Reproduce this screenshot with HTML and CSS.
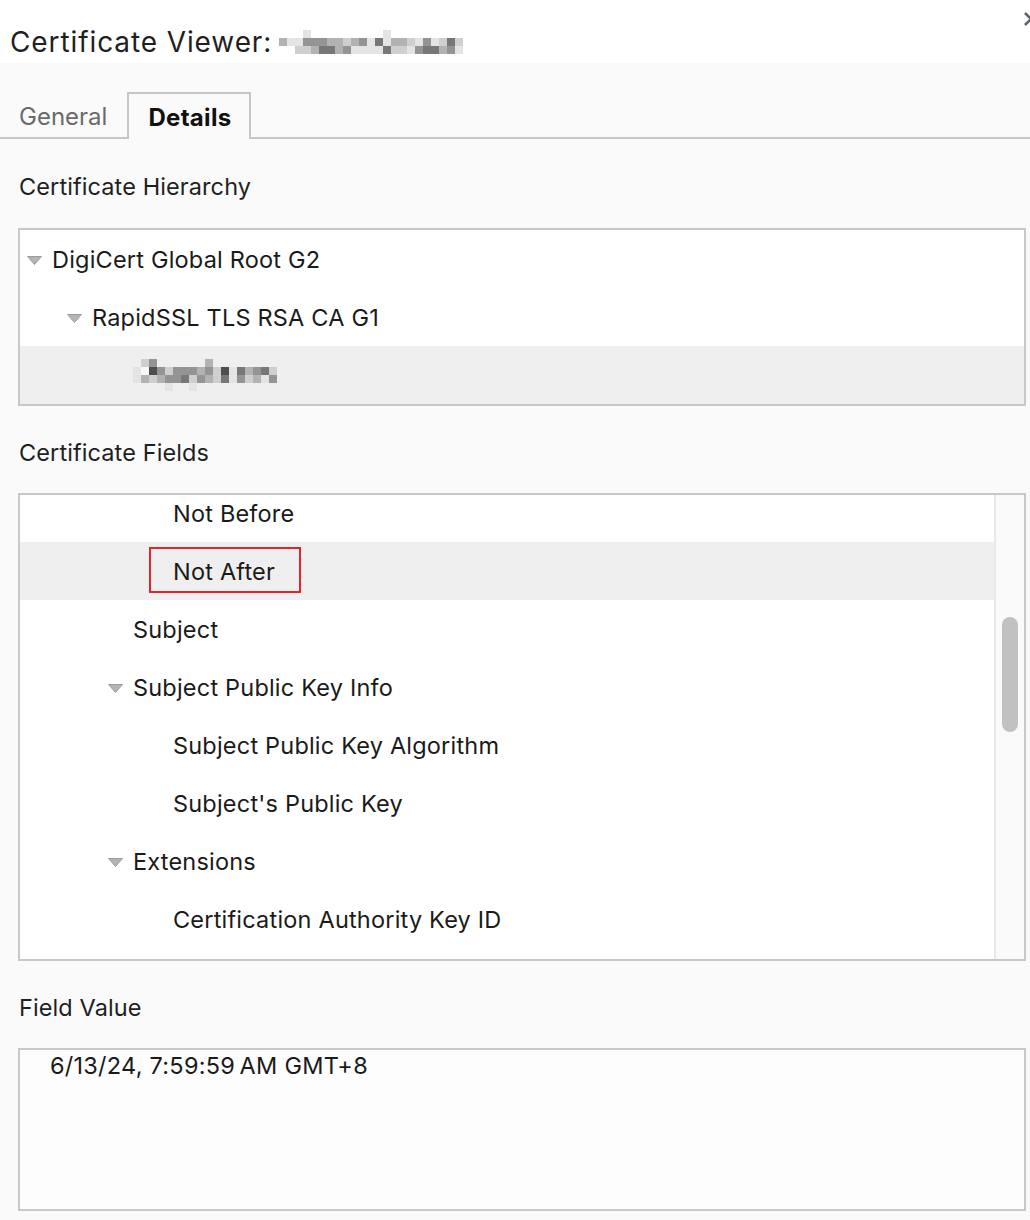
FILE: index.html
```html
<!DOCTYPE html>
<html lang="en">
<head>
<meta charset="utf-8">
<title>Certificate Viewer</title>
<link rel="stylesheet" href="styles.css">
</head>
<body>
<div class="dialog">
  <header class="titlebar">
    <h1 class="title">Certificate Viewer: <span class="mosaic m-title" aria-hidden="true">
      <span class="c0"></span><span class="c0"></span><span class="c0"></span><span class="c1"></span><span class="c0"></span><span class="c0"></span><span class="c0"></span><span class="c0"></span><span class="c0"></span><span class="c0"></span><span class="c0"></span><span class="c0"></span><span class="c0"></span><span class="c1"></span><span class="c0"></span><span class="c0"></span><span class="c0"></span><span class="c0"></span><span class="c0"></span><span class="c0"></span><span class="c0"></span><span class="c0"></span><span class="c0"></span>
      <span class="c3"></span><span class="c1"></span><span class="c1"></span><span class="c4"></span><span class="c4"></span><span class="c4"></span><span class="c3"></span><span class="c3"></span><span class="c2"></span><span class="c3"></span><span class="c4"></span><span class="c1"></span><span class="c5"></span><span class="c1"></span><span class="c3"></span><span class="c3"></span><span class="c2"></span><span class="c1"></span><span class="c4"></span><span class="c1"></span><span class="c2"></span><span class="c5"></span><span class="c2"></span>
      <span class="c0"></span><span class="c0"></span><span class="c2"></span><span class="c2"></span><span class="c3"></span><span class="c5"></span><span class="c5"></span><span class="c3"></span><span class="c4"></span><span class="c1"></span><span class="c1"></span><span class="c1"></span><span class="c1"></span><span class="c5"></span><span class="c2"></span><span class="c2"></span><span class="c1"></span><span class="c4"></span><span class="c5"></span><span class="c5"></span><span class="c3"></span><span class="c4"></span><span class="c1"></span>
    </span></h1>
    <svg class="close" viewBox="0 0 18 18" aria-hidden="true"><path d="M3 3 L15 15 M15 3 L3 15" /></svg>
  </header>

  <main class="main">
    <nav class="tabs">
      <div class="tab">General</div>
      <div class="tab active">Details</div>
    </nav>

    <section class="content">
      <div class="label first">Certificate Hierarchy</div>
      <div class="box hierarchy">
        <div class="row lvl0"><svg class="twisty" viewBox="0 0 15 9"><polygon points="0.5,0.5 14.5,0.5 7.5,8.5"/></svg>DigiCert Global Root G2</div>
        <div class="row lvl1"><svg class="twisty" viewBox="0 0 15 9"><polygon points="0.5,0.5 14.5,0.5 7.5,8.5"/></svg>RapidSSL TLS RSA CA G1</div>
        <div class="row lvl2 selected"><span class="mosaic m-host" aria-hidden="true">
          <span class="c0"></span><span class="c2"></span><span class="c4"></span><span class="c0"></span><span class="c0"></span><span class="c0"></span><span class="c0"></span><span class="c0"></span><span class="c0"></span><span class="c3"></span><span class="c0"></span><span class="c0"></span><span class="c0"></span><span class="c0"></span><span class="c0"></span><span class="c0"></span><span class="c0"></span><span class="c0"></span>
          <span class="c1"></span><span class="cw"></span><span class="c6"></span><span class="c4"></span><span class="c2"></span><span class="c4"></span><span class="c4"></span><span class="c4"></span><span class="c3"></span><span class="c4"></span><span class="c2"></span><span class="c6"></span><span class="c1"></span><span class="c5"></span><span class="c3"></span><span class="c4"></span><span class="c5"></span><span class="c2"></span>
          <span class="c1"></span><span class="c3"></span><span class="c2"></span><span class="c3"></span><span class="c4"></span><span class="c4"></span><span class="c5"></span><span class="c2"></span><span class="c4"></span><span class="c3"></span><span class="c2"></span><span class="c5"></span><span class="c1"></span><span class="c4"></span><span class="c2"></span><span class="c3"></span><span class="c1"></span><span class="c4"></span>
          <span class="c0"></span><span class="c0"></span><span class="c0"></span><span class="c0"></span><span class="c1"></span><span class="c0"></span><span class="c0"></span><span class="c1"></span><span class="c0"></span><span class="c0"></span><span class="c0"></span><span class="c0"></span><span class="c0"></span><span class="c0"></span><span class="c0"></span><span class="c0"></span><span class="c0"></span><span class="c0"></span>
        </span></div>
      </div>

      <div class="label">Certificate Fields</div>
      <div class="box fields">
        <div class="fields-view">
          <div class="fields-list">
            <div class="row lvl3">Not Before</div>
            <div class="row lvl3 selected">Not After<span class="highlight" aria-hidden="true"></span></div>
            <div class="row lvl2">Subject</div>
            <div class="row lvl2"><svg class="twisty" viewBox="0 0 15 9"><polygon points="0.5,0.5 14.5,0.5 7.5,8.5"/></svg>Subject Public Key Info</div>
            <div class="row lvl3">Subject Public Key Algorithm</div>
            <div class="row lvl3">Subject's Public Key</div>
            <div class="row lvl2"><svg class="twisty" viewBox="0 0 15 9"><polygon points="0.5,0.5 14.5,0.5 7.5,8.5"/></svg>Extensions</div>
            <div class="row lvl3">Certification Authority Key ID</div>
          </div>
        </div>
        <div class="scrollbar"><div class="thumb"></div></div>
      </div>

      <div class="label">Field Value</div>
      <div class="box value">6/13/24, 7:59:59&#8201;AM GMT+8</div>
    </section>
  </main>
</div>
</body>
</html>
```

FILE: styles.css
```css
* { box-sizing: border-box; }

html, body {
  margin: 0;
  padding: 0;
}

body {
  width: 1030px;
  height: 1220px;
  overflow: hidden;
  background: #fafafa;
  font-family: Inter, "Noto Sans", "Liberation Sans", sans-serif;
  color: #1f1f1f;
}

.dialog {
  position: relative;
  width: 1030px;
}

/* title bar */
.titlebar {
  position: relative;
  height: 63px;
  background: #ffffff;
  padding: 24px 0 0 10px;
}

.title {
  margin: 0;
  font-size: 28px;
  font-weight: 400;
  line-height: 36px;
  letter-spacing: 0.9px;
  color: #1f1f1f;
  display: flex;
  align-items: center;
  white-space: pre;
}

.close {
  position: absolute;
  top: 10px;
  right: -10px;
  width: 18px;
  height: 18px;
  fill: none;
  stroke: #5f6368;
  stroke-width: 2.6;
}

/* mosaic (pixelated redacted text) */
.mosaic {
  display: inline-grid;
  grid-auto-rows: 8px;
}
.mosaic span { display: block; }
.m-title {
  grid-template-columns: repeat(23, 8px);
  margin-left: -2px;
  margin-top: 0;
}
.m-host {
  grid-template-columns: repeat(18, 8px);
  margin-top: 0;
}
.c0 { background: transparent; }
.cw { background: #f7f7f7; }
.c1 { background: #e4e4e4; }
.c2 { background: #cfcfcf; }
.c3 { background: #b2b2b2; }
.c4 { background: #949494; }
.c5 { background: #777777; }
.c6 { background: #4e4e4e; }

/* tabs */
.main {
  padding-top: 29px;
}

.tabs {
  display: flex;
  height: 47px;
  border-bottom: 2px solid #c6c6c6;
  padding-left: 0;
}

.tab {
  font-size: 24px;
  line-height: 41px;
  height: 45px;
  padding: 4px 20px 0 19px;
  color: #6a6a6a;
}

.tab.active {
  height: 47px;
  margin-bottom: -2px;
  padding: 3px 18px 0 19px;
  font-weight: 700;
  color: #111111;
  background: #fafafa;
  border: 2px solid #c6c6c6;
  border-bottom: none;
  line-height: 41px;
  letter-spacing: 0.3px;
}

/* content */
.content {
  padding: 0 4px 0 18px;
}

.label {
  font-size: 23.5px;
  line-height: 30px;
  letter-spacing: 0.1px;
  margin: 32px 0 25px 1px;
  color: #1f1f1f;
}
.label.first {
  margin-top: 33px;
  margin-bottom: 26px;
}

.box {
  border: 2px solid #c8c8c8;
  background: #ffffff;
}

.row {
  position: relative;
  display: flex;
  align-items: center;
  height: 58px;
  font-size: 23.5px;
  letter-spacing: 0.2px;
  color: #1a1a1a;
  white-space: nowrap;
}
.row.selected { background: #efefef; }

.lvl0 { padding-left: 32px; }
.lvl1 { padding-left: 72px; }
.lvl2 { padding-left: 113px; }
.lvl3 { padding-left: 153px; }

.twisty {
  width: 15px;
  height: 9px;
  margin-left: -25px;
  margin-right: 10px;
  margin-top: 2px;
  fill: #b4b4b4;
  stroke: #9c9c9c;
  stroke-width: 1;
}

/* fields */
.fields {
  display: flex;
  height: 468px;
}

.fields-view {
  flex: 1;
  overflow: hidden;
}

.fields-list {
  margin-top: -11px;
}

.highlight {
  position: absolute;
  left: 129px;
  top: 5px;
  width: 152px;
  height: 46px;
  border: 2px solid #e0262b;
}

.scrollbar {
  width: 30px;
  border-left: 2px solid #e8e8e8;
  background: #fafafa;
  padding: 122px 0 0 6px;
}

.thumb {
  width: 16px;
  height: 115px;
  border-radius: 8px;
  background: #c1c1c1;
}

/* value */
.value {
  height: 163px;
  background: #fdfdfd;
  padding: 1px 0 0 30px;
  font-size: 23.5px;
  line-height: 30px;
  letter-spacing: 0.25px;
  color: #1a1a1a;
}
```
